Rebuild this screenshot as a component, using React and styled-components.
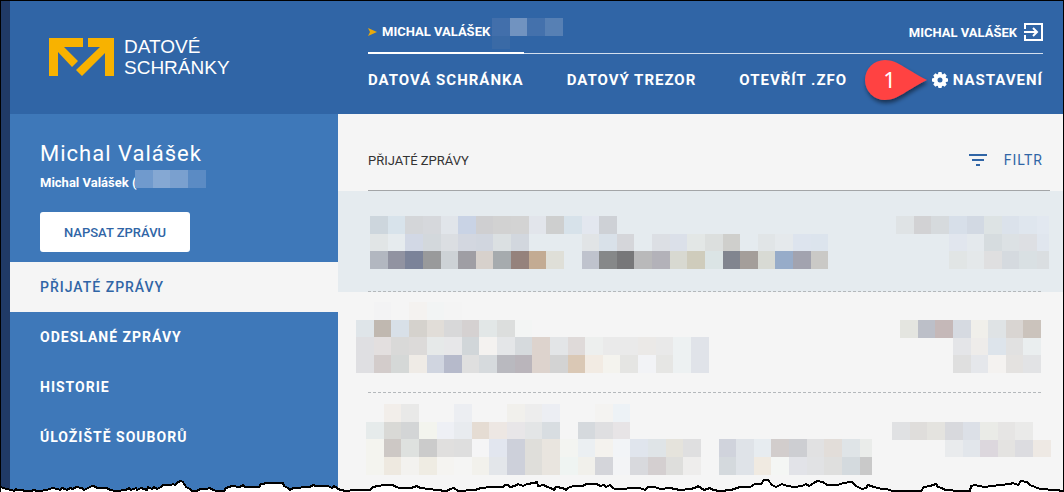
import styled, { createGlobalStyle, css } from "styled-components";

const GlobalStyle = createGlobalStyle`
  * {
    box-sizing: border-box;
  }
  body {
    margin: 0;
    font-family: Roboto, "Open Sans", sans-serif;
    color: #333;
    background: white;
  }
`;

const Page = styled.div`
  position: relative;
  min-height: 100vh;
  display: flex;
  flex-direction: column;
  overflow: hidden;
  border: solid black;
  border-width: 1px 1px 0;
  background: #f5f5f5;
`;

const Frame = styled.div`
  flex: 1;
  display: flex;
  flex-direction: column;
  border-left: 9px solid #203a66;
`;

const Header = styled.header`
  display: flex;
  height: 113px;
  background: #3065a6;
  color: white;
`;

const Brand = styled.a`
  width: 328px;
  flex-shrink: 0;
  display: flex;
  align-items: center;
  gap: 9px;
  padding-left: 39px;
  color: white;
  text-decoration: none;
`;

const BrandName = styled.span`
  padding-bottom: 2px;
  font-family: "Liberation Sans", Arial, sans-serif;
  font-size: 19px;
  line-height: 21px;
`;

const HeaderMain = styled.div`
  flex: 1;
  padding: 10px 20px 0 30px;
`;

const UserBar = styled.div`
  display: flex;
  justify-content: space-between;
  height: 43px;
  border-bottom: 1px solid #d3dfee;
`;

const AccountTab = styled.a`
  display: flex;
  align-items: center;
  width: 156px;
  height: 43px;
  border-bottom: 2px solid white;
  color: white;
  font-size: 13px;
  font-weight: 700;
  white-space: nowrap;
  text-decoration: none;

  svg {
    flex-shrink: 0;
  }
  svg:last-child {
    margin: 4px 0 0 2px;
  }
`;

const Pointer = styled.svg`
  margin-right: 5px;
`;

const Logout = styled.button`
  display: flex;
  align-items: center;
  gap: 7px;
  padding: 0;
  border: none;
  background: none;
  color: white;
  font: 700 13px Roboto, sans-serif;
  cursor: pointer;
`;

const Nav = styled.nav`
  display: flex;
  align-items: center;
  gap: 43px;
  height: 52px;
`;

const NavLink = styled.a`
  display: flex;
  align-items: center;
  gap: 5px;
  color: white;
  font-size: 15px;
  font-weight: 700;
  letter-spacing: 1px;
  white-space: nowrap;
  text-decoration: none;
  ${(props) => props.$last && css`
    position: relative;
    margin-left: auto;
  `}
`;

const Marker = styled.svg`
  position: absolute;
  right: 100%;
  top: -16px;
  font-family: "Noto Sans", sans-serif;
  font-size: 22px;
  font-weight: 400;
`;

const Body = styled.div`
  flex: 1;
  display: flex;
`;

const Sidebar = styled.aside`
  width: 328px;
  flex-shrink: 0;
  background: #3e78b9;
  color: white;
`;

const Profile = styled.div`
  padding: 26px 30px 10px;
`;

const Name = styled.h1`
  margin: 0;
  font-size: 22px;
  line-height: 28px;
  font-weight: 400;
  letter-spacing: 1px;
`;

const Account = styled.div`
  display: flex;
  align-items: center;
  height: 28px;
  margin-bottom: 16px;
  font-size: 13px;
  font-weight: 700;

  svg {
    margin: -6px 0 0 -1px;
  }
`;

const Button = styled.button`
  display: block;
  width: 150px;
  height: 40px;
  border: none;
  border-radius: 3px;
  background: white;
  color: #3065a6;
  font: 500 13px Roboto, sans-serif;
  cursor: pointer;
`;

const MenuItem = styled.a`
  display: flex;
  align-items: center;
  height: 50px;
  padding-left: 30px;
  color: ${(props) => (props.$active ? "#3065a6" : "white")};
  background: ${(props) => (props.$active ? "#f5f5f5" : "transparent")};
  font-size: 14px;
  font-weight: ${(props) => (props.$active ? 500 : 700)};
  letter-spacing: 1px;
  text-decoration: none;
`;

const Content = styled.main`
  flex: 1;
  min-width: 0;
`;

const ListHeader = styled.div`
  display: flex;
  align-items: center;
  justify-content: space-between;
  height: 77px;
  margin: 0 13px 0 30px;
  padding: 16px 7px 0 0;
  border-bottom: 1px solid #a3a5a7;
`;

const ListTitle = styled.h2`
  margin: 0;
  font-size: 13px;
  font-weight: 400;
`;

const Filter = styled.button`
  display: flex;
  align-items: center;
  gap: 17px;
  padding: 0;
  border: none;
  background: none;
  color: #3065a6;
  font: 400 14px Roboto, sans-serif;
  letter-spacing: 1px;
  cursor: pointer;
`;

const Message = styled.article`
  padding: 0 20px 0 30px;
  background: ${(props) => (props.$selected ? "#e5ebef" : "transparent")};
`;

const MessageInner = styled.div`
  display: flex;
  justify-content: space-between;
  height: ${(props) => (props.$last ? "99px" : "101px")};
  padding-top: 10px;
  ${(props) => !props.$last && css`
    background: repeating-linear-gradient(90deg, #b4b8bb 0 3px, transparent 3px 5px)
      left bottom / 100% 1px no-repeat;
  `}

  svg:first-child {
    margin-left: -12px;
  }
  svg:last-child {
    margin-right: -9px;
  }
`;

const TornEdge = styled.svg`
  position: absolute;
  left: -1px;
  bottom: 0;
  width: calc(100% + 2px);
  height: 32px;
`;

const CELL = 17.63;

// Hidden text, drawn as a mosaic. A dash is an empty cell.
const Mosaic = ({ width, height, x = 0, y = 0, clip = width, rows }) => (
  <svg width={width} height={height} shapeRendering="crispEdges" aria-hidden="true">
    {rows.map((row, r) =>
      row.split(" ").map((color, c) => {
        if (color === "-") return null;
        const left = Math.round(c * CELL);
        const right = Math.min(Math.round((c + 1) * CELL), clip);
        const top = Math.round(r * CELL);
        const bottom = Math.round((r + 1) * CELL);
        return (
          <rect
            key={`${r}-${c}`}
            x={x + left}
            y={y + top}
            width={right - left}
            height={bottom - top}
            fill={`#${color}`}
          />
        );
      })
    )}
  </svg>
);

const messages = [
  {
    selected: true,
    left: {
      x: 14,
      y: 15,
      rows: [
        "cdd6dd d8e3eb d4d6d9 d6d8dc e1e5ea c9d3e5 cfcfd1 d2d2d2 d3d3d3 e2e5eb cecfcf d7e2ea e3e7ef ced1d6",
        "e1e5e6 e6ebee d2d8e5 d3d8dc dbdee2 d3d7e0 d1d6df dbe0e2 d2d7de - - - e1e4e6 d9e1e9 d5d6da - dcdfe4 dbe0e9 e3e7e6 dcdfde cfcfcc - e1e5e7 e5e9ec dde4ee dce4ed",
        "b2b7c0 9193a1 7b8399 999a9b cdd2d6 9f9ea4 d7d1cc a6abae 95827c c3ab93 dfdfd8 - bfc3cd 868889 777779 b9b9ba b3b2b9 d8d9d1 cfccbc dbe4e5 81858f a49e9a d8dad4 97acc9 a2a3af cac9c6",
      ],
    },
    right: {
      x: 4,
      y: 15,
      clip: 153,
      rows: [
        "dfe3e5 d2d2d4 d6dadd d7dfe9 d2d9e3 dde3e4 dbe2eb dfe6ee e2e8f0",
        "- - - e1e6ee e4e9ed d6dcdf dce1e4 dddfe3 e0e6ee",
        "- - - e1e5e5 e4e8ea dfdfe0 d5dadf d9e0e3 dadee1",
      ],
    },
  },
  {
    left: {
      rows: [
        "- f3f3f4 - f4f2f0 f2f4f4 f4f4f4",
        "dfe5e9 c0b8b0 d8e0e8 d5d2cd e1ddd8 d8d8d9 d5d1d1 e2e7e7 dcdedd f3f5f4",
        "dfdfe2 e3dfdf d9d9d8 dcdad9 e6e9e9 e7e7e9 d1d6d9 f4f2f0 e4e6e8 d6dadd ddd3cd e3e5e7 dfdad9 edefee eaeaea eaeaea ebe9e7 e9e9e9 edf1f2 e0e3e9",
        "dfdfe2 d3cccb d5d8d7 efebe6 d0d5e0 b6bacb dfdfdf d6dadd b9b9bf bab5bb ddd3cd d3d3d3 dac8b5 f2ebe3 f4f3ee e5e5e3 f2f3f6 e6e6e4 edf1f2 e0e3e9",
      ],
    },
    right: {
      x: 8,
      y: 18,
      rows: [
        "e4e5e0 bcbfc8 c5b8b8 d6dae1 f0efea dfe3e5 d9d5d2 cbc3bc",
        "- - - e4e5e8 eeecea dde4eb e1e1e1 eaeeef",
        "- - - dfdfdf e5e7eb f4f2f0 e4e2e0 e2e3e5",
      ],
    },
  },
  {
    left: {
      x: 10,
      y: 1,
      clip: 506,
      rows: [
        "- f2eeea e9e9e8 - - eceef2 - - f1f0ec ededed eceef3 - - f4f3f1 edf2f6",
        "e6ebeb d9d9d6 d3d5d6 f3f4ee eef0f5 e8ebef e5dcd3 ede7e3 e8e6e8 e3e5e6 d8dde1 - d5d9dd dfdfe1 e7e4e6",
        "f4f4ef cdc8c5 dee1df cbcbcb e0dfde dedede f5f5f6 e2e6ef cdd0da dfdeda e9e5df f3f4f1 ebeff2 f4f2ee f2f4f7 e0e5ed dfe4e7 e5e3dc dfdfe0 - d0d3dc dfe3e8 e7ecf0 d2cdcc cdced2 e1e1e2 e2ddd9 dfe4e7 eaecea",
        "f4f4ef eee9e0 f3f2ef efece3 f5f4f1 f5f5f4 f2f1ec e3e6ea cdd0da dfdeda e9e5df eff4f2 f1f0eb d4d5da f3f4f6 d8d9dd d4cfd0 dededc eeedec - d4d9dd dfe3e8 f0eae1 f4f6f4 e2e3e8 e1e2e4 dfdfde d4dade c9c9c9",
      ],
    },
    right: {
      y: 19,
      rows: [
        "e0e1e3 dfdddb e4e3df d8d9dd dce0e7 eaebe7 e6e5e4 eaeae9",
        "- - - e9ebed e2e6eb dcd7dd e4e3e1 dcdce0 eee9e4",
      ],
    },
  },
];

const menu = ["Přijaté zprávy", "Odeslané zprávy", "Historie", "Úložiště souborů"];

const teeth = [0, 45, 90, 135, 180, 225, 270, 315];

const edge =
  "0,27 4,28 6,29 12,30 14,31 16,29 17,30 22,30 25,31 32,31 33,30 38,31 41,31 50,29 52,28 58,29 60,30 62,28 65,29 67,30 70,28 73,29 76,27 82,28 84,30 88,28 92,26 94,26 97,28 107,28 110,30 116,31 126,30 129,28 131,30 136,28 137,30 141,28 147,30 148,27 152,29 154,27 157,29 161,27 163,25 171,25 173,24 175,25 178,22 181,21 183,22 186,27 190,29 192,31 197,31 200,29 206,29 210,28 213,30 217,31 224,31 226,28 232,26 240,27 243,25 245,27 259,27 261,24 268,23 283,23 284,26 288,28 290,30 293,28 310,27 313,25 316,26 328,26 332,28 334,26 337,28 340,30 347,31 353,30 360,30 370,30 373,27 378,26 384,25 393,25 396,27 400,28 411,28 417,26 420,28 430,29 436,30 447,31 450,29 454,28 458,31 475,30 481,28 492,27 503,27 505,25 508,25 510,27 515,26 518,24 523,26 527,24 534,23 537,22 538,26 544,25 547,27 551,28 554,30 556,27 563,28 566,30 568,28 573,26 583,26 586,24 597,24 600,26 604,25 606,27 610,25 613,28 615,29 640,28 645,30 648,27 655,27 660,29 670,28 680,30 690,29 695,28 698,26 704,30 710,28 713,30 720,31 731,30 740,27 750,27 755,24 761,24 764,20 768,20 772,25 776,27 782,24 787,26 795,27 802,26 806,24 809,26 814,23 817,21 823,22 827,25 838,25 843,23 852,22 856,26 862,29 866,28 868,25 874,27 882,29 887,29 892,31 921,31 924,27 930,26 936,24 938,27 942,28 945,30 960,31 970,31 971,26 975,25 984,27 1000,25 1010,24 1013,23 1018,25 1021,21 1027,22 1030,25 1035,27 1040,29 1055,30 1064,31";

const App = () => {
  return (
    <>
      <GlobalStyle />
      <Page>
        <Frame>
          <Header>
            <Brand href="#">
              <svg width="66" height="39" viewBox="0 0 66 39" fill="#f8b200">
                <path d="M0 0h34v9H15L29 23l-6 6L9 14v24H0z" />
                <path d="M39 0h26v38h-9V15L33 38l-6-6L51 9H39z" />
              </svg>
              <BrandName>
                DATOVÉ
                <br />
                SCHRÁNKY
              </BrandName>
            </Brand>
            <HeaderMain>
              <UserBar>
                <AccountTab href="#">
                  <Pointer width="9" height="8" viewBox="0 0 9 8" fill="#e8a90c">
                    <path d="M0 0l9 4-9 4 2-4z" />
                  </Pointer>
                  MICHAL VALÁŠEK
                  <Mosaic
                    width={71}
                    height={31}
                    rows={["426fab 7193c0 4471ac 5780b4", "3a6aa6"]}
                  />
                </AccountTab>
                <Logout>
                  MICHAL VALÁŠEK
                  <svg width="19" height="18" viewBox="0 0 19 18" fill="none" stroke="white" strokeWidth="2">
                    <path d="M1 6V1h17v16H1v-5M0 9h13M9 5l4 4-4 4" />
                  </svg>
                </Logout>
              </UserBar>
              <Nav>
                <NavLink href="#">DATOVÁ SCHRÁNKA</NavLink>
                <NavLink href="#">DATOVÝ TREZOR</NavLink>
                <NavLink href="#">OTEVŘÍT .ZFO</NavLink>
                <NavLink href="#" $last>
                  <Marker width="72" height="56" viewBox="0 0 72 56">
                    <defs>
                      <filter id="shadow" x="-20%" y="-20%" width="140%" height="160%">
                        <feDropShadow dx="1" dy="3" stdDeviation="2" floodColor="#000" floodOpacity="0.5" />
                      </filter>
                    </defs>
                    <path
                      d="M25 5C38 5 48 16 67 25C48 34 38 45 25 45A20 20 0 0 1 25 5z"
                      fill="#ff4343"
                      filter="url(#shadow)"
                    />
                    <text x="30" y="33" textAnchor="middle" fill="white">
                      1
                    </text>
                  </Marker>
                  <svg width="16" height="16" viewBox="-8 -8 16 16">
                    <circle r="4.4" fill="none" stroke="white" strokeWidth="3.8" />
                    {teeth.map((angle) => (
                      <path
                        key={angle}
                        d="M-2.2 -5.4L-1.5 -8H1.5L2.2 -5.4z"
                        fill="white"
                        transform={`rotate(${angle})`}
                      />
                    ))}
                  </svg>
                  NASTAVENÍ
                </NavLink>
              </Nav>
            </HeaderMain>
          </Header>
          <Body>
            <Sidebar>
              <Profile>
                <Name>Michal Valášek</Name>
                <Account>
                  Michal Valášek (
                  <Mosaic width={71} height={18} rows={["709acd 85a8d3 7aa0cf 5b8bc4"]} />
                </Account>
                <Button>NAPSAT ZPRÁVU</Button>
              </Profile>
              <nav>
                {menu.map((item, i) => (
                  <MenuItem key={item} href="#" $active={i === 0}>
                    {item.toUpperCase()}
                  </MenuItem>
                ))}
              </nav>
            </Sidebar>
            <Content>
              <ListHeader>
                <ListTitle>PŘIJATÉ ZPRÁVY</ListTitle>
                <Filter>
                  <svg width="18" height="12" viewBox="0 0 18 12" fill="#3065a6">
                    <path d="M0 0h18v2H0zM3 5h12v2H3zM7 10h4v2H7z" />
                  </svg>
                  FILTR
                </Filter>
              </ListHeader>
              {messages.map((message, i) => (
                <Message key={i} $selected={message.selected}>
                  <MessageInner $last={i === messages.length - 1}>
                    <Mosaic width={520} height={72} {...message.left} />
                    <Mosaic width={160} height={72} {...message.right} />
                  </MessageInner>
                </Message>
              ))}
            </Content>
          </Body>
        </Frame>
        <TornEdge viewBox="0 0 1064 32" preserveAspectRatio="none" shapeRendering="crispEdges">
          <polygon points={`${edge} 1064,32 0,32`} fill="white" />
          <polyline points={edge} fill="none" stroke="black" strokeWidth="2" />
        </TornEdge>
      </Page>
    </>
  );
};

export default App;
